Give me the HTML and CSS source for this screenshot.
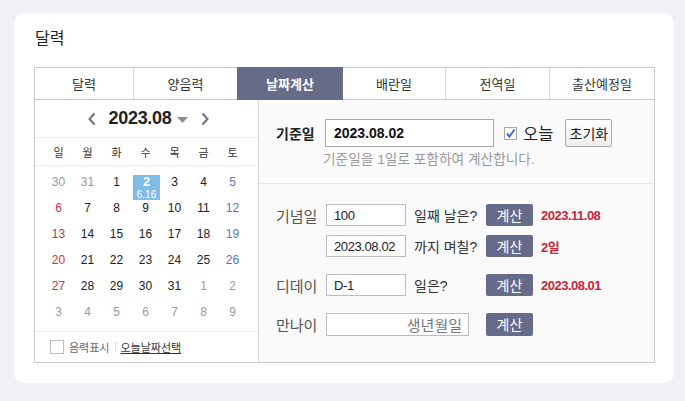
FILE: index.html
```html
<!DOCTYPE html>
<html lang="ko">
<head>
<meta charset="utf-8">
<title>달력</title>
<link rel="stylesheet" href="styles.css">
</head>
<body>
<div class="card">
  <h1 class="title">달력</h1>
  <div class="widget">
    <ul class="tabs">
      <li class="tab t1">달력</li>
      <li class="tab t2">양음력</li>
      <li class="tab t3 active">날짜계산</li>
      <li class="tab t4">배란일</li>
      <li class="tab t5">전역일</li>
      <li class="tab t6">출산예정일</li>
    </ul>
    <div class="content">
      <div class="cal">
        <div class="cal-head">
          <svg class="nav" width="8" height="14" viewBox="0 0 8 14"><path d="M6.5 1.5 L1.5 7 L6.5 12.5" fill="none" stroke="#6b7088" stroke-width="2"/></svg>
          <span class="month">2023.08</span>
          <svg class="caret" width="11" height="6" viewBox="0 0 11 6"><path d="M0 0 H11 L5.5 6 Z" fill="#8a8d99"/></svg>
          <svg class="nav" width="8" height="14" viewBox="0 0 8 14"><path d="M1.5 1.5 L6.5 7 L1.5 12.5" fill="none" stroke="#6b7088" stroke-width="2"/></svg>
        </div>
        <div class="weekdays">
          <span>일</span><span>월</span><span>화</span><span>수</span><span>목</span><span>금</span><span>토</span>
        </div>
        <div class="days">
          <span class="d other">30</span><span class="d other">31</span><span class="d">1</span><span class="d"><span class="sel"><b>2</b><small>6.16</small></span></span><span class="d">3</span><span class="d">4</span><span class="d sat">5</span>
          <span class="d sun">6</span><span class="d">7</span><span class="d">8</span><span class="d">9</span><span class="d">10</span><span class="d">11</span><span class="d sat">12</span>
          <span class="d sun">13</span><span class="d">14</span><span class="d">15</span><span class="d">16</span><span class="d">17</span><span class="d">18</span><span class="d sat">19</span>
          <span class="d sun">20</span><span class="d">21</span><span class="d">22</span><span class="d">23</span><span class="d">24</span><span class="d">25</span><span class="d sat">26</span>
          <span class="d sun">27</span><span class="d">28</span><span class="d">29</span><span class="d">30</span><span class="d">31</span><span class="d other">1</span><span class="d other">2</span>
          <span class="d other">3</span><span class="d other">4</span><span class="d other">5</span><span class="d other">6</span><span class="d other">7</span><span class="d other">8</span><span class="d other">9</span>
        </div>
        <div class="cal-foot">
          <span class="box"></span>
          <span class="lunar">음력표시</span>
          <span class="bar"></span>
          <a class="today-link">오늘날짜선택</a>
        </div>
      </div>
      <div class="calc">
        <div class="base">
          <div class="base-row">
            <span class="base-label">기준일</span>
            <span class="base-input">2023.08.02</span>
            <span class="check"><svg width="11" height="11" viewBox="0 0 11 11"><path d="M2 5.5 L4.5 8.5 L9.5 1.5" fill="none" stroke="#4d68c9" stroke-width="2"/></svg></span>
            <span class="today">오늘</span>
            <span class="reset">초기화</span>
          </div>
          <p class="hint">기준일을 1일로 포함하여 계산합니다.</p>
        </div>
        <div class="rows">
          <div class="row">
            <span class="label">기념일</span>
            <span class="field">100</span>
            <span class="text">일째 날은?</span>
            <span class="btn">계산</span>
            <span class="result">2023.11.08</span>
          </div>
          <div class="row row-tight">
            <span class="label"></span>
            <span class="field">2023.08.02</span>
            <span class="text">까지 며칠?</span>
            <span class="btn">계산</span>
            <span class="result">2일</span>
          </div>
          <div class="row">
            <span class="label">디데이</span>
            <span class="field">D-1</span>
            <span class="text">일은?</span>
            <span class="btn">계산</span>
            <span class="result">2023.08.01</span>
          </div>
          <div class="row">
            <span class="label">만나이</span>
            <span class="field wide">생년월일</span>
            <span class="btn">계산</span>
          </div>
        </div>
      </div>
    </div>
  </div>
</div>
</body>
</html>
```

FILE: styles.css
```css
* { box-sizing: border-box; }
body {
  margin: 0;
  background: #eff1f5;
  font-family: "Liberation Sans", "Noto Sans CJK KR", sans-serif;
  color: #333;
}
.card {
  margin: 13px 0 0 14px;
  width: 660px;
  height: 370px;
  background: #fff;
  border-radius: 10px;
  padding: 16px 20px 0 20px;
}
.title {
  margin: 0 0 18px 1px;
  font-size: 16px;
  font-weight: normal;
  line-height: 20px;
  color: #222;
}
.widget {
  width: 621px;
  border: 1px solid #c9c9c9;
}
.tabs {
  list-style: none;
  margin: 0;
  padding: 0;
  display: flex;
  height: 32px;
  border-bottom: 1px solid #c9c9c9;
}
.tab {
  flex: none;
  display: flex;
  align-items: center;
  justify-content: center;
  font-size: 13px;
  color: #333;
  border-left: 1px solid #d6d6d6;
}
.t1 { width: 98px; border-left: none; }
.t2 { width: 104px; }
.t3 { width: 105px; }
.t4 { width: 103px; }
.t5 { width: 104px; }
.t6 { flex: 1; }
.tab.active {
  background: #666b89;
  color: #fff;
  font-weight: bold;
  margin: -1px 0 -1px 0;
  border-left-color: #666b89;
  box-shadow: 1px 0 0 #666b89;
  position: relative;
}
.content {
  display: flex;
  height: 262px;
}
.cal {
  width: 224px;
  border-right: 1px solid #d6d6d6;
  background: #fff;
  display: flex;
  flex-direction: column;
}
.cal-head {
  height: 38px;
  border-bottom: 1px solid #ececec;
  display: flex;
  align-items: center;
  justify-content: center;
  padding-left: 4px;
}
.month {
  font-size: 18px;
  font-weight: bold;
  color: #222;
  margin: 0 6px 0 13px;
  letter-spacing: -0.3px;
}
.caret { margin-right: 13px; margin-top: 2px; }
.weekdays {
  height: 28px;
  border-bottom: 1px solid #ececec;
  display: grid;
  grid-template-columns: repeat(7, 29px);
  padding: 0 10px 0 9px;
  align-items: center;
}
.weekdays span {
  text-align: center;
  font-size: 11px;
  color: #333;
}
.days {
  display: grid;
  grid-template-columns: repeat(7, 29px);
  grid-auto-rows: 26px;
  padding: 3px 10px 5px 9px;
  height: 166px;
  border-bottom: 1px solid #ececec;
}
.d {
  display: flex;
  flex-direction: column;
  align-items: center;
  padding-top: 6px;
  font-size: 12px;
  line-height: 14px;
  color: #222;
}
.d.other { color: #9a9a9a; }
.d.sun { color: #c8304a; }
.d.sat { color: #5876bd; }
.sel {
  width: 27px;
  height: 25px;
  margin-left: 2px;
  background: #7fbde6;
  color: #fff;
  display: flex;
  flex-direction: column;
  align-items: center;
}
.sel b { font-size: 13px; line-height: 14px; }
.sel small { font-size: 10px; line-height: 11px; }
.cal-foot {
  flex: 1;
  display: flex;
  align-items: center;
  padding-left: 15px;
  font-size: 11px;
}
.box {
  width: 14px;
  height: 14px;
  border: 1px solid #bdbdbd;
  background: #fff;
  margin-right: 5px;
}
.lunar { color: #666; }
.bar {
  width: 1px;
  height: 11px;
  background: #ddd;
  margin: 0 4px 0 6px;
}
.today-link {
  color: #333;
  text-decoration: underline;
}
.calc {
  flex: 1;
  background: #fafafa;
}
.base {
  height: 84px;
  border-bottom: 1px solid #e8e8e8;
  padding: 19px 0 0 17px;
}
.base-row {
  display: flex;
  align-items: center;
  height: 28px;
}
.base-label {
  width: 49px;
  font-size: 14px;
  font-weight: bold;
  color: #222;
}
.base-input {
  width: 169px;
  height: 28px;
  border: 1px solid #a9a9a9;
  background: #fff;
  font-size: 14px;
  font-weight: bold;
  color: #111;
  padding-left: 8px;
  display: flex;
  align-items: center;
}
.check {
  width: 13px;
  height: 13px;
  border: 1px solid #a9a9a9;
  background: #fff;
  margin-left: 10px;
  display: flex;
  align-items: center;
  justify-content: center;
}
.today {
  font-size: 16.5px;
  color: #222;
  margin-left: 6px;
}
.reset {
  margin-left: 12px;
  width: 47px;
  height: 28px;
  border: 1px solid #aaa;
  border-radius: 2px;
  background: linear-gradient(#fdfdfd, #eeeeee);
  font-size: 14px;
  color: #222;
  display: flex;
  align-items: center;
  justify-content: center;
}
.hint {
  margin: 5px 0 0 47px;
  font-size: 13.7px;
  line-height: 16px;
  color: #9a9a9a;
  white-space: nowrap;
}
.rows {
  padding: 20px 0 0 17px;
}
.row {
  display: flex;
  align-items: center;
  height: 22px;
  margin-top: 17px;
}
.row:first-child { margin-top: 0; }
.row.row-tight { margin-top: 9px; }
.label {
  width: 50px;
  font-size: 15px;
  color: #555;
}
.field {
  width: 80px;
  height: 22px;
  border: 1px solid #bdbdbd;
  background: #fff;
  font-size: 13px;
  letter-spacing: -0.4px;
  color: #222;
  padding-left: 7px;
  display: flex;
  align-items: center;
}
.field.wide {
  width: 143px;
  height: 23px;
  justify-content: flex-end;
  padding: 0 6px 0 0;
  font-size: 15px;
  color: #777;
  letter-spacing: 0;
  margin-right: 17px;
}
.text {
  width: 64px;
  margin-left: 8px;
  font-size: 14px;
  color: #333;
  white-space: nowrap;
}
.btn {
  width: 47px;
  height: 22px;
  margin-left: 8px;
  background: #666b89;
  border-radius: 2px;
  color: #fff;
  font-size: 14px;
  display: flex;
  align-items: center;
  justify-content: center;
}
.field.wide + .btn { margin-left: 0; height: 23px; }
.result {
  margin-left: 8px;
  font-size: 13px;
  font-weight: bold;
  letter-spacing: -0.5px;
  color: #c8243c;
}
```
